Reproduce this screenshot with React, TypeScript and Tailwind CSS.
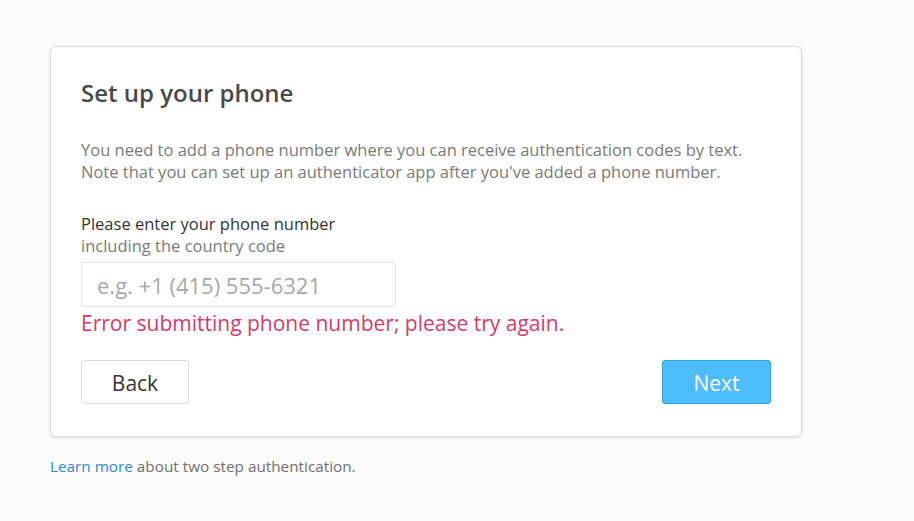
export default function App() {
  return (
    <div
      className="min-h-[521px] w-full bg-[#fbfbfb] pl-[50px] pr-[112px] pt-[46px]"
      style={{ fontFamily: '"Open Sans", "Noto Sans", sans-serif' }}
    >
      <div className="w-[752px] rounded-[6px] border border-[#dcdcdc] bg-white px-[30px] pb-[32px] pt-[31px] shadow-[0_1px_3px_rgba(0,0,0,0.12)]">
        <h1 className="text-[24px] font-semibold leading-[30px] text-[#4a4a4a]">Set up your phone</h1>

        <p className="mt-[31px] text-[16.5px] leading-[22px] text-[#7a7a7a]">
          You need to add a phone number where you can receive authentication codes by text.
          <br />
          Note that you can set up an authenticator app after you've added a phone number.
        </p>

        <div className="mt-[30px]">
          <div className="text-[16.5px] leading-[22px] text-[#333333]">Please enter your phone number</div>
          <div className="text-[16.5px] leading-[22px] text-[#7a7a7a]">including the country code</div>
        </div>

        <input
          type="text"
          placeholder="e.g. +1 (415) 555-6321"
          className="mt-[5px] block h-[45px] w-[315px] rounded-[2px] border border-[#e3e3e3] px-[15px] text-[22px] text-[#333] placeholder:text-[#a8a8a8] focus:outline-none"
        />

        <div className="mt-[2px] text-[21px] leading-[28px] text-[#d63a6a]">
          Error submitting phone number; please try again.
        </div>

        <div className="mt-[23px] flex items-center justify-between">
          <button className="h-[44px] w-[108px] rounded-[3px] border border-[#dddddd] bg-white pt-[3px] text-[21px] text-[#333333]">
            Back
          </button>
          <button className="h-[44px] w-[109px] rounded-[3px] border border-[#2ea6e6] bg-[#4dbcfb] pt-[3px] text-[21px] text-white">
            Next
          </button>
        </div>
      </div>

      <p className="mt-[19px] text-[15.3px] leading-[20px] text-[#707070]">
        <a href="#" className="text-[#2a8ccf]">Learn more</a> about two step authentication.
      </p>
    </div>
  )
}
